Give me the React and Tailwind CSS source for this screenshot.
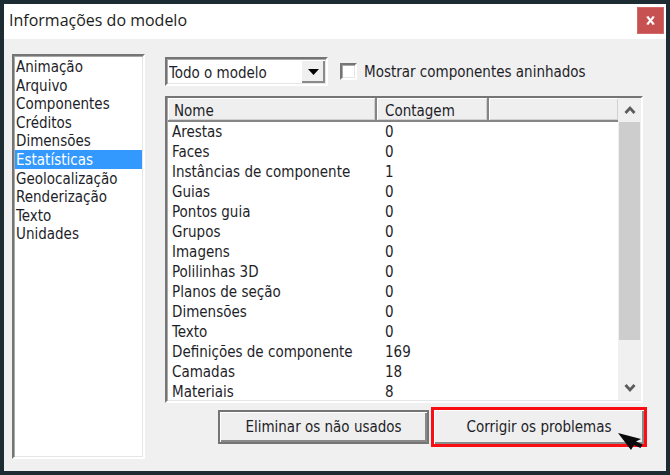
import React, { useState } from 'react'

const sections = [
  'Animação',
  'Arquivo',
  'Componentes',
  'Créditos',
  'Dimensões',
  'Estatísticas',
  'Geolocalização',
  'Renderização',
  'Texto',
  'Unidades',
]

const stats = [
  ['Arestas', 0],
  ['Faces', 0],
  ['Instâncias de componente', 1],
  ['Guias', 0],
  ['Pontos guia', 0],
  ['Grupos', 0],
  ['Imagens', 0],
  ['Polilinhas 3D', 0],
  ['Planos de seção', 0],
  ['Dimensões', 0],
  ['Texto', 0],
  ['Definições de componente', 169],
  ['Camadas', 18],
  ['Materiais', 8],
]

// Classic bevels: sunken for fields, raised for buttons and headers
const sunken =
  'bg-white border-2 border-t-[#757575] border-l-[#757575] border-r-white border-b-white shadow-[inset_1px_1px_0_#a8a8a8,inset_-1px_-1px_0_#e6e6e6]'
const raised =
  'bg-[#efefef] shadow-[inset_1px_1px_0_#fff,inset_-2px_-2px_0_#8a8a8a]'
const headerCell =
  'h-6 pt-[3px] leading-[18px] text-left font-normal border-b-2 border-[#858585] bg-[#efefef] shadow-[inset_1px_1px_0_#fff,inset_-1px_-1px_0_#d0d0d0]'

const TitleBar = () => (
  <header className="flex items-start justify-between bg-white h-[35px] pl-[5px] pr-[2px] pt-[3px]">
    <h1 className="font-['Open_Sans',sans-serif] text-[16px] leading-[27px] text-[#1c1c1c]">
      Informações do modelo
    </h1>
    <button
      aria-label="Fechar"
      className="flex items-center justify-center w-[27px] h-[27px] bg-[#c75050] border border-[#d26a6a]"
    >
      <svg width="9" height="9" viewBox="0 0 9 9" fill="none" stroke="#fff">
        <path d="M1.5 1 L7.5 8 M7.5 1 L1.5 8" strokeWidth="2" />
        <path d="M0.5 1 H3 M6 1 H8.5 M0.5 8 H3 M6 8 H8.5" strokeWidth="1" />
      </svg>
    </button>
  </header>
)

const SectionList = ({ active, setActive }) => (
  <nav className={`w-[133px] shrink-0 pt-px pl-px pr-px ${sunken}`}>
    <ul className="grid auto-rows-fr h-[186px]">
      {sections.map((name) => (
        <li
          key={name}
          className={
            name === active ? 'flex bg-[#3399ff] text-white' : 'flex'
          }
        >
          <button
            onClick={() => setActive(name)}
            className="w-full text-left leading-[18px] pl-px pt-px"
          >
            {name}
          </button>
        </li>
      ))}
    </ul>
  </nav>
)

const StatsTable = () => (
  <div className={`flex flex-1 min-h-0 overflow-hidden ${sunken}`}>
    <div className="flex-1 overflow-hidden pl-px">
      <table className="w-full table-fixed border-separate border-spacing-0">
        <thead>
          <tr>
            <th className={`w-[209px] border-r-2 pl-[6px] ${headerCell}`}>
              Nome
            </th>
            <th className={`w-[112px] border-r-2 pl-[8px] ${headerCell}`}>
              Contagem
            </th>
            <th className={headerCell} aria-label="Vazio"></th>
          </tr>
        </thead>
        <tbody>
          {stats.map(([name, count]) => (
            <tr key={name}>
              <td className="h-5 leading-5 pl-[4px]">{name}</td>
              <td className="h-5 leading-5 pl-[8px]">{count}</td>
              <td></td>
            </tr>
          ))}
        </tbody>
      </table>
    </div>
    <div className="flex flex-col w-[23px] mb-px pl-px pr-px bg-[#f0f0f0]">
      <div className="flex items-center justify-center h-6">
        <svg width="12" height="10" viewBox="0 0 12 10" fill="none">
          <path d="M1.5 8 L6 3 L10.5 8" stroke="#5c5c5c" strokeWidth="2.8" />
        </svg>
      </div>
      <div className="flex-1">
        <div className="h-[86%] bg-[#cdcdcd]" />
      </div>
      <div className="flex items-center justify-center h-6">
        <svg width="12" height="10" viewBox="0 0 12 10" fill="none">
          <path d="M1.5 2 L6 7 L10.5 2" stroke="#5c5c5c" strokeWidth="2.8" />
        </svg>
      </div>
    </div>
  </div>
)

const Cursor = () => (
  <svg
    className="absolute right-0 -bottom-2"
    width="26"
    height="20"
    viewBox="0 0 26 20"
  >
    <path
      d="M0 1 L23 7 L18 9.5 L24.5 12.5 L22.5 16 L16 13 L13 18 Z"
      fill="#0a0a0a"
    />
  </svg>
)

const App = () => {
  const [active, setActive] = useState('Estatísticas')

  return (
    <div className="h-screen bg-[#1d2c33] p-1 font-['DejaVu_Sans_Condensed','DejaVu_Sans',sans-serif] text-[15px] text-[#1e1e28]">
      <div className="flex flex-col h-full bg-[#f0f0f0]">
        <TitleBar />
        <main className="flex flex-1 min-h-0 gap-5 pl-2 pr-[23px] pt-[15px] pb-3">
          <SectionList active={active} setActive={setActive} />
          <div className="flex flex-col flex-1 min-w-0 pt-[3px] pb-3">
            <div className="flex items-center gap-3 mb-[10px]">
              <div className={`flex w-[163px] h-[29px] p-px ${sunken}`}>
                <select
                  aria-label="Escopo"
                  className="flex-1 min-w-0 appearance-none bg-transparent pl-px pt-[2px] outline-none"
                >
                  <option>Todo o modelo</option>
                </select>
                <span
                  className={`flex items-center justify-center w-[24px] pointer-events-none ${raised}`}
                >
                  <svg width="11" height="6" viewBox="0 0 11 6">
                    <path d="M0 0 H11 L5.5 6 Z" fill="#000" />
                  </svg>
                </span>
              </div>
              <label className="flex items-center gap-[7px]">
                <input
                  type="checkbox"
                  className={`appearance-none w-[17px] h-[17px] ${sunken}`}
                />
                <span className="pt-[2px]">Mostrar componentes aninhados</span>
              </label>
            </div>
            <StatsTable />
            <div className="flex justify-end gap-[2px] mt-[4px] -mr-1">
              <button
                className={`w-[211px] h-[34px] my-[3px] border-2 border-[#757575] ${raised}`}
              >
                Eliminar os não usados
              </button>
              <div className="relative border-[3px] border-[#fb0d14] w-[216px] h-[40px]">
                <button className={`w-full h-full ${raised}`}>
                  Corrigir os problemas
                </button>
                <Cursor />
              </div>
            </div>
          </div>
        </main>
      </div>
    </div>
  )
}

export default App
